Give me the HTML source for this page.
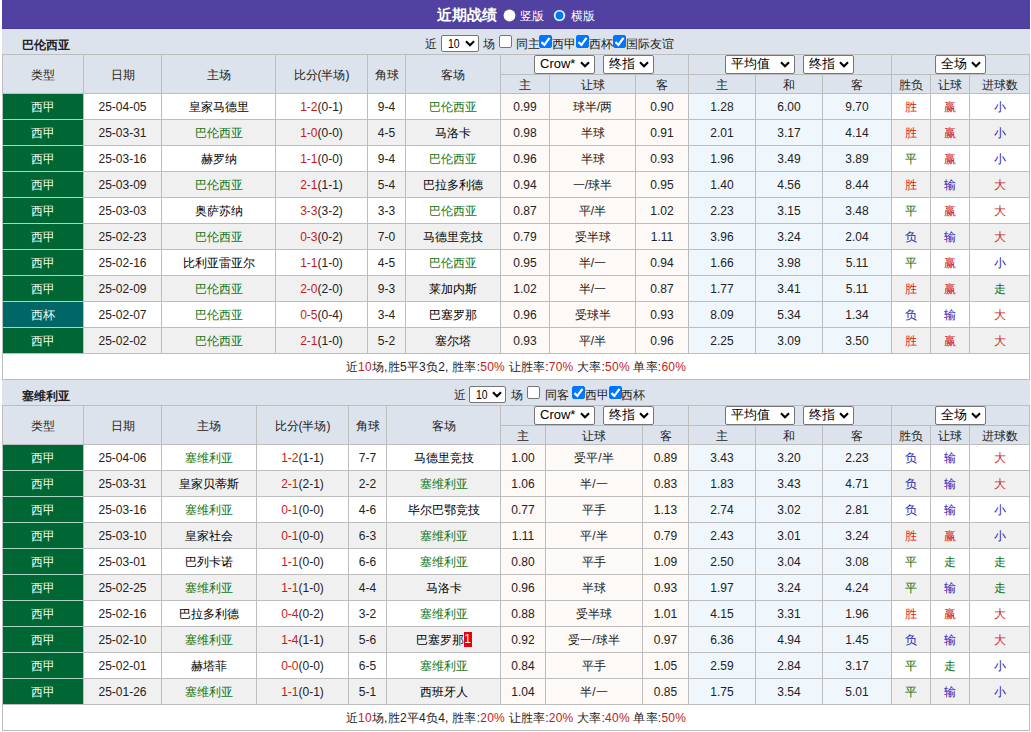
<!DOCTYPE html>
<html><head><meta charset="utf-8"><title>近期战绩</title><style>
*{margin:0;padding:0;box-sizing:border-box}
html,body{width:1031px;height:732px;overflow:hidden;background:#fff}
body{position:relative;font-family:"Liberation Sans",sans-serif;font-size:12px;color:#222}
.b,.c,.t,.team,.title,.ttl2,.radio,.sel,.cb{position:absolute}
.c{text-align:center;white-space:nowrap;overflow:hidden}
.t{height:22px;line-height:28px;font-size:12px;color:#222;white-space:nowrap}
.team{font-weight:bold;font-size:12px;color:#222}
.title{font-weight:bold;font-size:15px;color:#fff;white-space:nowrap}
.ttl2{font-size:12px;color:#fff;white-space:nowrap}
.radio{width:12px;height:12px;border-radius:50%;background:#fff}
.radio.on{background:#0075ff;border:1px solid #0075ff;box-shadow:inset 0 0 0 2px #fff}
.sel{background:#fff;border:1px solid #767676;border-radius:2px;color:#000;white-space:nowrap}
.sel .st{position:absolute;top:0}
.sel .chev{position:absolute;right:3px}
.cb{width:13px;height:13px;border:1px solid #767676;border-radius:2px;background:#fff}
.cb.on{background:#0075ff;border-color:#0075ff}
.cb svg{position:absolute;left:-1px;top:-1px}
.rc{display:inline-block;background:#e8000e;color:#fff;width:8px;height:15px;line-height:15px;text-align:center;vertical-align:middle;margin-top:-2px}
</style></head>
<body>
<div class="b" style="left:2px;top:0px;width:1028px;height:29px;background:#5141a0;"></div>
<div class="b" style="left:2px;top:28px;width:1028px;height:1px;background:#4a3c90;"></div>
<div class="b" style="left:2px;top:29px;width:1028px;height:1px;background:#e2e4f6;"></div>
<div class="title" style="left:437px;top:0px;height:29px;line-height:30px;">近期战绩</div>
<svg class="b" style="left:500px;top:6px" width="20" height="20" viewBox="0 0 20 20"><circle cx="9.5" cy="9.5" r="5.9" fill="#fff"/></svg>
<div class="ttl2" style="left:520px;top:0px;height:29px;line-height:33px;">竖版</div>
<svg class="b" style="left:550px;top:6px" width="20" height="20" viewBox="0 0 20 20"><circle cx="9.5" cy="9.5" r="6.6" fill="#3a66d8" opacity="0.55"/><circle cx="9.5" cy="9.5" r="5.6" fill="#e8ffff"/><circle cx="9.5" cy="9.5" r="3.9" fill="#0075ff"/></svg>
<div class="ttl2" style="left:571px;top:0px;height:29px;line-height:33px;">横版</div>
<div class="b" style="left:2px;top:29px;width:1028px;height:25px;background:#dce3ec;"></div>
<div class="team" style="left:22px;top:29px;height:25px;line-height:32px;">巴伦西亚</div>
<div class="t" style="left:425px;top:30px;">近</div>
<div class="sel sm" style="left:441px;top:35px;width:38px;height:17px;"><span class="st" style="left:6px;font-size:13px;line-height:15px;display:inline-block;transform:scaleX(0.8);transform-origin:0 0;">10</span><svg class="chev" style="top:4px;right:3px" width="10" height="7" viewBox="0 0 10 7"><path d="M1 1.2 L5 5.2 L9 1.2" fill="none" stroke="#000" stroke-width="2.1"/></svg></div>
<div class="t" style="left:483px;top:30px;">场</div>
<div class="cb" style="left:499px;top:35px;"></div>
<div class="t" style="left:516px;top:30px;">同主</div>
<div class="cb on" style="left:539px;top:35px;"><svg width="13" height="13" viewBox="0 0 13 13"><path d="M2.4 7.1 L5.4 9.8 L10.5 2.8" fill="none" stroke="#fff" stroke-width="2.2"/></svg></div>
<div class="t" style="left:552px;top:30px;">西甲</div>
<div class="cb on" style="left:576px;top:35px;"><svg width="13" height="13" viewBox="0 0 13 13"><path d="M2.4 7.1 L5.4 9.8 L10.5 2.8" fill="none" stroke="#fff" stroke-width="2.2"/></svg></div>
<div class="t" style="left:589px;top:30px;">西杯</div>
<div class="cb on" style="left:613px;top:35px;"><svg width="13" height="13" viewBox="0 0 13 13"><path d="M2.4 7.1 L5.4 9.8 L10.5 2.8" fill="none" stroke="#fff" stroke-width="2.2"/></svg></div>
<div class="t" style="left:626px;top:30px;">国际友谊</div>
<div class="b" style="left:2px;top:54px;width:1028px;height:326px;background:#bdbdbd;"></div>
<div class="c" style="left:3px;top:55px;width:80px;height:38px;line-height:40px;background:#dce3ec;color:#222;">类型</div>
<div class="c" style="left:84px;top:55px;width:77px;height:38px;line-height:40px;background:#dce3ec;color:#222;">日期</div>
<div class="c" style="left:162px;top:55px;width:113px;height:38px;line-height:40px;background:#dce3ec;color:#222;">主场</div>
<div class="c" style="left:276px;top:55px;width:91px;height:38px;line-height:40px;background:#dce3ec;color:#222;">比分(半场)</div>
<div class="c" style="left:368px;top:55px;width:37px;height:38px;line-height:40px;background:#dce3ec;color:#222;">角球</div>
<div class="c" style="left:406px;top:55px;width:94px;height:38px;line-height:40px;background:#dce3ec;color:#222;">客场</div>
<div class="b" style="left:501px;top:55px;width:187px;height:19px;background:#dce3ec;"></div>
<div class="b" style="left:689px;top:55px;width:202px;height:19px;background:#dce3ec;"></div>
<div class="b" style="left:892px;top:55px;width:137px;height:19px;background:#dce3ec;"></div>
<div class="c" style="left:501px;top:75px;width:48px;height:18px;line-height:20px;background:#dce3ec;color:#222;">主</div>
<div class="c" style="left:550px;top:75px;width:85px;height:18px;line-height:20px;background:#dce3ec;color:#222;">让球</div>
<div class="c" style="left:636px;top:75px;width:52px;height:18px;line-height:20px;background:#dce3ec;color:#222;">客</div>
<div class="c" style="left:689px;top:75px;width:66px;height:18px;line-height:20px;background:#dce3ec;color:#222;">主</div>
<div class="c" style="left:756px;top:75px;width:66px;height:18px;line-height:20px;background:#dce3ec;color:#222;">和</div>
<div class="c" style="left:823px;top:75px;width:68px;height:18px;line-height:20px;background:#dce3ec;color:#222;">客</div>
<div class="c" style="left:892px;top:75px;width:38px;height:18px;line-height:20px;background:#dce3ec;color:#222;">胜负</div>
<div class="c" style="left:931px;top:75px;width:38px;height:18px;line-height:20px;background:#dce3ec;color:#222;">让球</div>
<div class="c" style="left:970px;top:75px;width:59px;height:18px;line-height:20px;background:#dce3ec;color:#222;">进球数</div>
<div class="sel" style="left:534px;top:55px;width:61px;height:19px;"><span class="st" style="left:5px;font-size:13px;line-height:16px;">Crow*</span><svg class="chev" style="top:5px;right:4px" width="10" height="7" viewBox="0 0 10 7"><path d="M1 1.2 L5 5.2 L9 1.2" fill="none" stroke="#000" stroke-width="2.1"/></svg></div>
<div class="sel" style="left:603px;top:55px;width:51px;height:19px;"><span class="st" style="left:5px;font-size:13px;line-height:16px;">终指</span><svg class="chev" style="top:5px;right:4px" width="10" height="7" viewBox="0 0 10 7"><path d="M1 1.2 L5 5.2 L9 1.2" fill="none" stroke="#000" stroke-width="2.1"/></svg></div>
<div class="sel" style="left:725px;top:55px;width:70px;height:19px;"><span class="st" style="left:5px;font-size:13px;line-height:16px;">平均值</span><svg class="chev" style="top:5px;right:4px" width="10" height="7" viewBox="0 0 10 7"><path d="M1 1.2 L5 5.2 L9 1.2" fill="none" stroke="#000" stroke-width="2.1"/></svg></div>
<div class="sel" style="left:803px;top:55px;width:51px;height:19px;"><span class="st" style="left:5px;font-size:13px;line-height:16px;">终指</span><svg class="chev" style="top:5px;right:4px" width="10" height="7" viewBox="0 0 10 7"><path d="M1 1.2 L5 5.2 L9 1.2" fill="none" stroke="#000" stroke-width="2.1"/></svg></div>
<div class="sel" style="left:935px;top:55px;width:51px;height:19px;"><span class="st" style="left:5px;font-size:13px;line-height:16px;">全场</span><svg class="chev" style="top:5px;right:4px" width="10" height="7" viewBox="0 0 10 7"><path d="M1 1.2 L5 5.2 L9 1.2" fill="none" stroke="#000" stroke-width="2.1"/></svg></div>
<div class="c" style="left:3px;top:94px;width:80px;height:25px;line-height:27px;background:#006633;color:#f0fff8;">西甲</div>
<div class="c" style="left:84px;top:94px;width:77px;height:25px;line-height:27px;background:#ffffff;">25-04-05</div>
<div class="c" style="left:162px;top:94px;width:113px;height:25px;line-height:27px;background:#ffffff;color:#000;">皇家马德里</div>
<div class="c" style="left:276px;top:94px;width:91px;height:25px;line-height:27px;background:#ffffff;"><span style="color:#c41a1a">1-2</span>(0-1)</div>
<div class="c" style="left:368px;top:94px;width:37px;height:25px;line-height:27px;background:#ffffff;">9-4</div>
<div class="c" style="left:406px;top:94px;width:94px;height:25px;line-height:27px;background:#ffffff;color:#137513;">巴伦西亚</div>
<div class="c" style="left:501px;top:94px;width:48px;height:25px;line-height:27px;background:#fdf9f6;">0.99</div>
<div class="c" style="left:550px;top:94px;width:85px;height:25px;line-height:27px;background:#fdf9f6;">球半/两</div>
<div class="c" style="left:636px;top:94px;width:52px;height:25px;line-height:27px;background:#fdf9f6;">0.90</div>
<div class="c" style="left:689px;top:94px;width:66px;height:25px;line-height:27px;background:#eff7fc;">1.28</div>
<div class="c" style="left:756px;top:94px;width:66px;height:25px;line-height:27px;background:#eff7fc;">6.00</div>
<div class="c" style="left:823px;top:94px;width:68px;height:25px;line-height:27px;background:#eff7fc;">9.70</div>
<div class="c" style="left:892px;top:94px;width:38px;height:25px;line-height:27px;background:#ffffff;color:#e02020;">胜</div>
<div class="c" style="left:931px;top:94px;width:38px;height:25px;line-height:27px;background:#ffffff;color:#d02020;">赢</div>
<div class="c" style="left:970px;top:94px;width:59px;height:25px;line-height:27px;background:#ffffff;color:#1c1cb4;">小</div>
<div class="c" style="left:3px;top:120px;width:80px;height:25px;line-height:27px;background:#006633;color:#f0fff8;">西甲</div>
<div class="b" style="left:3px;top:119px;width:80px;height:1px;background:#a9d6c2;"></div>
<div class="c" style="left:84px;top:120px;width:77px;height:25px;line-height:27px;background:#f0f0f0;">25-03-31</div>
<div class="c" style="left:162px;top:120px;width:113px;height:25px;line-height:27px;background:#f0f0f0;color:#137513;">巴伦西亚</div>
<div class="c" style="left:276px;top:120px;width:91px;height:25px;line-height:27px;background:#f0f0f0;"><span style="color:#c41a1a">1-0</span>(0-0)</div>
<div class="c" style="left:368px;top:120px;width:37px;height:25px;line-height:27px;background:#f0f0f0;">4-5</div>
<div class="c" style="left:406px;top:120px;width:94px;height:25px;line-height:27px;background:#f0f0f0;color:#000;">马洛卡</div>
<div class="c" style="left:501px;top:120px;width:48px;height:25px;line-height:27px;background:#fdf9f6;">0.98</div>
<div class="c" style="left:550px;top:120px;width:85px;height:25px;line-height:27px;background:#fdf9f6;">半球</div>
<div class="c" style="left:636px;top:120px;width:52px;height:25px;line-height:27px;background:#fdf9f6;">0.91</div>
<div class="c" style="left:689px;top:120px;width:66px;height:25px;line-height:27px;background:#eff7fc;">2.01</div>
<div class="c" style="left:756px;top:120px;width:66px;height:25px;line-height:27px;background:#eff7fc;">3.17</div>
<div class="c" style="left:823px;top:120px;width:68px;height:25px;line-height:27px;background:#eff7fc;">4.14</div>
<div class="c" style="left:892px;top:120px;width:38px;height:25px;line-height:27px;background:#f0f0f0;color:#e02020;">胜</div>
<div class="c" style="left:931px;top:120px;width:38px;height:25px;line-height:27px;background:#f0f0f0;color:#d02020;">赢</div>
<div class="c" style="left:970px;top:120px;width:59px;height:25px;line-height:27px;background:#f0f0f0;color:#1c1cb4;">小</div>
<div class="c" style="left:3px;top:146px;width:80px;height:25px;line-height:27px;background:#006633;color:#f0fff8;">西甲</div>
<div class="b" style="left:3px;top:145px;width:80px;height:1px;background:#a9d6c2;"></div>
<div class="c" style="left:84px;top:146px;width:77px;height:25px;line-height:27px;background:#ffffff;">25-03-16</div>
<div class="c" style="left:162px;top:146px;width:113px;height:25px;line-height:27px;background:#ffffff;color:#000;">赫罗纳</div>
<div class="c" style="left:276px;top:146px;width:91px;height:25px;line-height:27px;background:#ffffff;"><span style="color:#c41a1a">1-1</span>(0-0)</div>
<div class="c" style="left:368px;top:146px;width:37px;height:25px;line-height:27px;background:#ffffff;">9-4</div>
<div class="c" style="left:406px;top:146px;width:94px;height:25px;line-height:27px;background:#ffffff;color:#137513;">巴伦西亚</div>
<div class="c" style="left:501px;top:146px;width:48px;height:25px;line-height:27px;background:#fdf9f6;">0.96</div>
<div class="c" style="left:550px;top:146px;width:85px;height:25px;line-height:27px;background:#fdf9f6;">半球</div>
<div class="c" style="left:636px;top:146px;width:52px;height:25px;line-height:27px;background:#fdf9f6;">0.93</div>
<div class="c" style="left:689px;top:146px;width:66px;height:25px;line-height:27px;background:#eff7fc;">1.96</div>
<div class="c" style="left:756px;top:146px;width:66px;height:25px;line-height:27px;background:#eff7fc;">3.49</div>
<div class="c" style="left:823px;top:146px;width:68px;height:25px;line-height:27px;background:#eff7fc;">3.89</div>
<div class="c" style="left:892px;top:146px;width:38px;height:25px;line-height:27px;background:#ffffff;color:#0b6e0b;">平</div>
<div class="c" style="left:931px;top:146px;width:38px;height:25px;line-height:27px;background:#ffffff;color:#d02020;">赢</div>
<div class="c" style="left:970px;top:146px;width:59px;height:25px;line-height:27px;background:#ffffff;color:#1c1cb4;">小</div>
<div class="c" style="left:3px;top:172px;width:80px;height:25px;line-height:27px;background:#006633;color:#f0fff8;">西甲</div>
<div class="b" style="left:3px;top:171px;width:80px;height:1px;background:#a9d6c2;"></div>
<div class="c" style="left:84px;top:172px;width:77px;height:25px;line-height:27px;background:#f0f0f0;">25-03-09</div>
<div class="c" style="left:162px;top:172px;width:113px;height:25px;line-height:27px;background:#f0f0f0;color:#137513;">巴伦西亚</div>
<div class="c" style="left:276px;top:172px;width:91px;height:25px;line-height:27px;background:#f0f0f0;"><span style="color:#c41a1a">2-1</span>(1-1)</div>
<div class="c" style="left:368px;top:172px;width:37px;height:25px;line-height:27px;background:#f0f0f0;">5-4</div>
<div class="c" style="left:406px;top:172px;width:94px;height:25px;line-height:27px;background:#f0f0f0;color:#000;">巴拉多利德</div>
<div class="c" style="left:501px;top:172px;width:48px;height:25px;line-height:27px;background:#fdf9f6;">0.94</div>
<div class="c" style="left:550px;top:172px;width:85px;height:25px;line-height:27px;background:#fdf9f6;">一/球半</div>
<div class="c" style="left:636px;top:172px;width:52px;height:25px;line-height:27px;background:#fdf9f6;">0.95</div>
<div class="c" style="left:689px;top:172px;width:66px;height:25px;line-height:27px;background:#eff7fc;">1.40</div>
<div class="c" style="left:756px;top:172px;width:66px;height:25px;line-height:27px;background:#eff7fc;">4.56</div>
<div class="c" style="left:823px;top:172px;width:68px;height:25px;line-height:27px;background:#eff7fc;">8.44</div>
<div class="c" style="left:892px;top:172px;width:38px;height:25px;line-height:27px;background:#f0f0f0;color:#e02020;">胜</div>
<div class="c" style="left:931px;top:172px;width:38px;height:25px;line-height:27px;background:#f0f0f0;color:#1c1cb4;">输</div>
<div class="c" style="left:970px;top:172px;width:59px;height:25px;line-height:27px;background:#f0f0f0;color:#cc2a1a;">大</div>
<div class="c" style="left:3px;top:198px;width:80px;height:25px;line-height:27px;background:#006633;color:#f0fff8;">西甲</div>
<div class="b" style="left:3px;top:197px;width:80px;height:1px;background:#a9d6c2;"></div>
<div class="c" style="left:84px;top:198px;width:77px;height:25px;line-height:27px;background:#ffffff;">25-03-03</div>
<div class="c" style="left:162px;top:198px;width:113px;height:25px;line-height:27px;background:#ffffff;color:#000;">奥萨苏纳</div>
<div class="c" style="left:276px;top:198px;width:91px;height:25px;line-height:27px;background:#ffffff;"><span style="color:#c41a1a">3-3</span>(3-2)</div>
<div class="c" style="left:368px;top:198px;width:37px;height:25px;line-height:27px;background:#ffffff;">3-3</div>
<div class="c" style="left:406px;top:198px;width:94px;height:25px;line-height:27px;background:#ffffff;color:#137513;">巴伦西亚</div>
<div class="c" style="left:501px;top:198px;width:48px;height:25px;line-height:27px;background:#fdf9f6;">0.87</div>
<div class="c" style="left:550px;top:198px;width:85px;height:25px;line-height:27px;background:#fdf9f6;">平/半</div>
<div class="c" style="left:636px;top:198px;width:52px;height:25px;line-height:27px;background:#fdf9f6;">1.02</div>
<div class="c" style="left:689px;top:198px;width:66px;height:25px;line-height:27px;background:#eff7fc;">2.23</div>
<div class="c" style="left:756px;top:198px;width:66px;height:25px;line-height:27px;background:#eff7fc;">3.15</div>
<div class="c" style="left:823px;top:198px;width:68px;height:25px;line-height:27px;background:#eff7fc;">3.48</div>
<div class="c" style="left:892px;top:198px;width:38px;height:25px;line-height:27px;background:#ffffff;color:#0b6e0b;">平</div>
<div class="c" style="left:931px;top:198px;width:38px;height:25px;line-height:27px;background:#ffffff;color:#d02020;">赢</div>
<div class="c" style="left:970px;top:198px;width:59px;height:25px;line-height:27px;background:#ffffff;color:#cc2a1a;">大</div>
<div class="c" style="left:3px;top:224px;width:80px;height:25px;line-height:27px;background:#006633;color:#f0fff8;">西甲</div>
<div class="b" style="left:3px;top:223px;width:80px;height:1px;background:#a9d6c2;"></div>
<div class="c" style="left:84px;top:224px;width:77px;height:25px;line-height:27px;background:#f0f0f0;">25-02-23</div>
<div class="c" style="left:162px;top:224px;width:113px;height:25px;line-height:27px;background:#f0f0f0;color:#137513;">巴伦西亚</div>
<div class="c" style="left:276px;top:224px;width:91px;height:25px;line-height:27px;background:#f0f0f0;"><span style="color:#c41a1a">0-3</span>(0-2)</div>
<div class="c" style="left:368px;top:224px;width:37px;height:25px;line-height:27px;background:#f0f0f0;">7-0</div>
<div class="c" style="left:406px;top:224px;width:94px;height:25px;line-height:27px;background:#f0f0f0;color:#000;">马德里竞技</div>
<div class="c" style="left:501px;top:224px;width:48px;height:25px;line-height:27px;background:#fdf9f6;">0.79</div>
<div class="c" style="left:550px;top:224px;width:85px;height:25px;line-height:27px;background:#fdf9f6;">受半球</div>
<div class="c" style="left:636px;top:224px;width:52px;height:25px;line-height:27px;background:#fdf9f6;">1.11</div>
<div class="c" style="left:689px;top:224px;width:66px;height:25px;line-height:27px;background:#eff7fc;">3.96</div>
<div class="c" style="left:756px;top:224px;width:66px;height:25px;line-height:27px;background:#eff7fc;">3.24</div>
<div class="c" style="left:823px;top:224px;width:68px;height:25px;line-height:27px;background:#eff7fc;">2.04</div>
<div class="c" style="left:892px;top:224px;width:38px;height:25px;line-height:27px;background:#f0f0f0;color:#1c1cb4;">负</div>
<div class="c" style="left:931px;top:224px;width:38px;height:25px;line-height:27px;background:#f0f0f0;color:#1c1cb4;">输</div>
<div class="c" style="left:970px;top:224px;width:59px;height:25px;line-height:27px;background:#f0f0f0;color:#cc2a1a;">大</div>
<div class="c" style="left:3px;top:250px;width:80px;height:25px;line-height:27px;background:#006633;color:#f0fff8;">西甲</div>
<div class="b" style="left:3px;top:249px;width:80px;height:1px;background:#a9d6c2;"></div>
<div class="c" style="left:84px;top:250px;width:77px;height:25px;line-height:27px;background:#ffffff;">25-02-16</div>
<div class="c" style="left:162px;top:250px;width:113px;height:25px;line-height:27px;background:#ffffff;color:#000;">比利亚雷亚尔</div>
<div class="c" style="left:276px;top:250px;width:91px;height:25px;line-height:27px;background:#ffffff;"><span style="color:#c41a1a">1-1</span>(1-0)</div>
<div class="c" style="left:368px;top:250px;width:37px;height:25px;line-height:27px;background:#ffffff;">4-5</div>
<div class="c" style="left:406px;top:250px;width:94px;height:25px;line-height:27px;background:#ffffff;color:#137513;">巴伦西亚</div>
<div class="c" style="left:501px;top:250px;width:48px;height:25px;line-height:27px;background:#fdf9f6;">0.95</div>
<div class="c" style="left:550px;top:250px;width:85px;height:25px;line-height:27px;background:#fdf9f6;">半/一</div>
<div class="c" style="left:636px;top:250px;width:52px;height:25px;line-height:27px;background:#fdf9f6;">0.94</div>
<div class="c" style="left:689px;top:250px;width:66px;height:25px;line-height:27px;background:#eff7fc;">1.66</div>
<div class="c" style="left:756px;top:250px;width:66px;height:25px;line-height:27px;background:#eff7fc;">3.98</div>
<div class="c" style="left:823px;top:250px;width:68px;height:25px;line-height:27px;background:#eff7fc;">5.11</div>
<div class="c" style="left:892px;top:250px;width:38px;height:25px;line-height:27px;background:#ffffff;color:#0b6e0b;">平</div>
<div class="c" style="left:931px;top:250px;width:38px;height:25px;line-height:27px;background:#ffffff;color:#d02020;">赢</div>
<div class="c" style="left:970px;top:250px;width:59px;height:25px;line-height:27px;background:#ffffff;color:#1c1cb4;">小</div>
<div class="c" style="left:3px;top:276px;width:80px;height:25px;line-height:27px;background:#006633;color:#f0fff8;">西甲</div>
<div class="b" style="left:3px;top:275px;width:80px;height:1px;background:#a9d6c2;"></div>
<div class="c" style="left:84px;top:276px;width:77px;height:25px;line-height:27px;background:#f0f0f0;">25-02-09</div>
<div class="c" style="left:162px;top:276px;width:113px;height:25px;line-height:27px;background:#f0f0f0;color:#137513;">巴伦西亚</div>
<div class="c" style="left:276px;top:276px;width:91px;height:25px;line-height:27px;background:#f0f0f0;"><span style="color:#c41a1a">2-0</span>(2-0)</div>
<div class="c" style="left:368px;top:276px;width:37px;height:25px;line-height:27px;background:#f0f0f0;">9-3</div>
<div class="c" style="left:406px;top:276px;width:94px;height:25px;line-height:27px;background:#f0f0f0;color:#000;">莱加内斯</div>
<div class="c" style="left:501px;top:276px;width:48px;height:25px;line-height:27px;background:#fdf9f6;">1.02</div>
<div class="c" style="left:550px;top:276px;width:85px;height:25px;line-height:27px;background:#fdf9f6;">半/一</div>
<div class="c" style="left:636px;top:276px;width:52px;height:25px;line-height:27px;background:#fdf9f6;">0.87</div>
<div class="c" style="left:689px;top:276px;width:66px;height:25px;line-height:27px;background:#eff7fc;">1.77</div>
<div class="c" style="left:756px;top:276px;width:66px;height:25px;line-height:27px;background:#eff7fc;">3.41</div>
<div class="c" style="left:823px;top:276px;width:68px;height:25px;line-height:27px;background:#eff7fc;">5.11</div>
<div class="c" style="left:892px;top:276px;width:38px;height:25px;line-height:27px;background:#f0f0f0;color:#e02020;">胜</div>
<div class="c" style="left:931px;top:276px;width:38px;height:25px;line-height:27px;background:#f0f0f0;color:#d02020;">赢</div>
<div class="c" style="left:970px;top:276px;width:59px;height:25px;line-height:27px;background:#f0f0f0;color:#0b6e0b;">走</div>
<div class="c" style="left:3px;top:302px;width:80px;height:25px;line-height:27px;background:#006666;color:#f0fff8;">西杯</div>
<div class="b" style="left:3px;top:301px;width:80px;height:1px;background:#a9d6c2;"></div>
<div class="c" style="left:84px;top:302px;width:77px;height:25px;line-height:27px;background:#ffffff;">25-02-07</div>
<div class="c" style="left:162px;top:302px;width:113px;height:25px;line-height:27px;background:#ffffff;color:#137513;">巴伦西亚</div>
<div class="c" style="left:276px;top:302px;width:91px;height:25px;line-height:27px;background:#ffffff;"><span style="color:#c41a1a">0-5</span>(0-4)</div>
<div class="c" style="left:368px;top:302px;width:37px;height:25px;line-height:27px;background:#ffffff;">3-4</div>
<div class="c" style="left:406px;top:302px;width:94px;height:25px;line-height:27px;background:#ffffff;color:#000;">巴塞罗那</div>
<div class="c" style="left:501px;top:302px;width:48px;height:25px;line-height:27px;background:#fdf9f6;">0.96</div>
<div class="c" style="left:550px;top:302px;width:85px;height:25px;line-height:27px;background:#fdf9f6;">受球半</div>
<div class="c" style="left:636px;top:302px;width:52px;height:25px;line-height:27px;background:#fdf9f6;">0.93</div>
<div class="c" style="left:689px;top:302px;width:66px;height:25px;line-height:27px;background:#eff7fc;">8.09</div>
<div class="c" style="left:756px;top:302px;width:66px;height:25px;line-height:27px;background:#eff7fc;">5.34</div>
<div class="c" style="left:823px;top:302px;width:68px;height:25px;line-height:27px;background:#eff7fc;">1.34</div>
<div class="c" style="left:892px;top:302px;width:38px;height:25px;line-height:27px;background:#ffffff;color:#1c1cb4;">负</div>
<div class="c" style="left:931px;top:302px;width:38px;height:25px;line-height:27px;background:#ffffff;color:#1c1cb4;">输</div>
<div class="c" style="left:970px;top:302px;width:59px;height:25px;line-height:27px;background:#ffffff;color:#cc2a1a;">大</div>
<div class="c" style="left:3px;top:328px;width:80px;height:25px;line-height:27px;background:#006633;color:#f0fff8;">西甲</div>
<div class="b" style="left:3px;top:327px;width:80px;height:1px;background:#a9d6c2;"></div>
<div class="c" style="left:84px;top:328px;width:77px;height:25px;line-height:27px;background:#f0f0f0;">25-02-02</div>
<div class="c" style="left:162px;top:328px;width:113px;height:25px;line-height:27px;background:#f0f0f0;color:#137513;">巴伦西亚</div>
<div class="c" style="left:276px;top:328px;width:91px;height:25px;line-height:27px;background:#f0f0f0;"><span style="color:#c41a1a">2-1</span>(1-0)</div>
<div class="c" style="left:368px;top:328px;width:37px;height:25px;line-height:27px;background:#f0f0f0;">5-2</div>
<div class="c" style="left:406px;top:328px;width:94px;height:25px;line-height:27px;background:#f0f0f0;color:#000;">塞尔塔</div>
<div class="c" style="left:501px;top:328px;width:48px;height:25px;line-height:27px;background:#fdf9f6;">0.93</div>
<div class="c" style="left:550px;top:328px;width:85px;height:25px;line-height:27px;background:#fdf9f6;">平/半</div>
<div class="c" style="left:636px;top:328px;width:52px;height:25px;line-height:27px;background:#fdf9f6;">0.96</div>
<div class="c" style="left:689px;top:328px;width:66px;height:25px;line-height:27px;background:#eff7fc;">2.25</div>
<div class="c" style="left:756px;top:328px;width:66px;height:25px;line-height:27px;background:#eff7fc;">3.09</div>
<div class="c" style="left:823px;top:328px;width:68px;height:25px;line-height:27px;background:#eff7fc;">3.50</div>
<div class="c" style="left:892px;top:328px;width:38px;height:25px;line-height:27px;background:#f0f0f0;color:#e02020;">胜</div>
<div class="c" style="left:931px;top:328px;width:38px;height:25px;line-height:27px;background:#f0f0f0;color:#d02020;">赢</div>
<div class="c" style="left:970px;top:328px;width:59px;height:25px;line-height:27px;background:#f0f0f0;color:#cc2a1a;">大</div>
<div class="c" style="left:3px;top:354px;width:1026px;height:25px;line-height:27px;background:#ffffff;letter-spacing:0.23px;">近<span style="color:#c41a1a">10</span>场,胜5平3负2, 胜率:<span style="color:#c41a1a">50%</span> 让胜率:<span style="color:#c41a1a">70%</span> 大率:<span style="color:#c41a1a">50%</span> 单率:<span style="color:#c41a1a">60%</span></div>
<div class="b" style="left:2px;top:380px;width:1028px;height:25px;background:#dce3ec;"></div>
<div class="team" style="left:22px;top:380px;height:25px;line-height:32px;">塞维利亚</div>
<div class="t" style="left:454px;top:381px;">近</div>
<div class="sel sm" style="left:469px;top:386px;width:37px;height:17px;"><span class="st" style="left:6px;font-size:13px;line-height:15px;display:inline-block;transform:scaleX(0.8);transform-origin:0 0;">10</span><svg class="chev" style="top:4px;right:3px" width="10" height="7" viewBox="0 0 10 7"><path d="M1 1.2 L5 5.2 L9 1.2" fill="none" stroke="#000" stroke-width="2.1"/></svg></div>
<div class="t" style="left:511px;top:381px;">场</div>
<div class="cb" style="left:527px;top:386px;"></div>
<div class="t" style="left:545px;top:381px;">同客</div>
<div class="cb on" style="left:572px;top:386px;"><svg width="13" height="13" viewBox="0 0 13 13"><path d="M2.4 7.1 L5.4 9.8 L10.5 2.8" fill="none" stroke="#fff" stroke-width="2.2"/></svg></div>
<div class="t" style="left:585px;top:381px;">西甲</div>
<div class="cb on" style="left:609px;top:386px;"><svg width="13" height="13" viewBox="0 0 13 13"><path d="M2.4 7.1 L5.4 9.8 L10.5 2.8" fill="none" stroke="#fff" stroke-width="2.2"/></svg></div>
<div class="t" style="left:621px;top:381px;">西杯</div>
<div class="b" style="left:2px;top:405px;width:1028px;height:326px;background:#bdbdbd;"></div>
<div class="c" style="left:3px;top:406px;width:80px;height:38px;line-height:40px;background:#dce3ec;color:#222;">类型</div>
<div class="c" style="left:84px;top:406px;width:77px;height:38px;line-height:40px;background:#dce3ec;color:#222;">日期</div>
<div class="c" style="left:162px;top:406px;width:94px;height:38px;line-height:40px;background:#dce3ec;color:#222;">主场</div>
<div class="c" style="left:257px;top:406px;width:91px;height:38px;line-height:40px;background:#dce3ec;color:#222;">比分(半场)</div>
<div class="c" style="left:349px;top:406px;width:37px;height:38px;line-height:40px;background:#dce3ec;color:#222;">角球</div>
<div class="c" style="left:387px;top:406px;width:113px;height:38px;line-height:40px;background:#dce3ec;color:#222;">客场</div>
<div class="b" style="left:501px;top:406px;width:187px;height:19px;background:#dce3ec;"></div>
<div class="b" style="left:689px;top:406px;width:202px;height:19px;background:#dce3ec;"></div>
<div class="b" style="left:892px;top:406px;width:137px;height:19px;background:#dce3ec;"></div>
<div class="c" style="left:501px;top:426px;width:44px;height:18px;line-height:20px;background:#dce3ec;color:#222;">主</div>
<div class="c" style="left:546px;top:426px;width:96px;height:18px;line-height:20px;background:#dce3ec;color:#222;">让球</div>
<div class="c" style="left:643px;top:426px;width:45px;height:18px;line-height:20px;background:#dce3ec;color:#222;">客</div>
<div class="c" style="left:689px;top:426px;width:66px;height:18px;line-height:20px;background:#dce3ec;color:#222;">主</div>
<div class="c" style="left:756px;top:426px;width:66px;height:18px;line-height:20px;background:#dce3ec;color:#222;">和</div>
<div class="c" style="left:823px;top:426px;width:68px;height:18px;line-height:20px;background:#dce3ec;color:#222;">客</div>
<div class="c" style="left:892px;top:426px;width:38px;height:18px;line-height:20px;background:#dce3ec;color:#222;">胜负</div>
<div class="c" style="left:931px;top:426px;width:38px;height:18px;line-height:20px;background:#dce3ec;color:#222;">让球</div>
<div class="c" style="left:970px;top:426px;width:59px;height:18px;line-height:20px;background:#dce3ec;color:#222;">进球数</div>
<div class="sel" style="left:534px;top:406px;width:61px;height:19px;"><span class="st" style="left:5px;font-size:13px;line-height:16px;">Crow*</span><svg class="chev" style="top:5px;right:4px" width="10" height="7" viewBox="0 0 10 7"><path d="M1 1.2 L5 5.2 L9 1.2" fill="none" stroke="#000" stroke-width="2.1"/></svg></div>
<div class="sel" style="left:603px;top:406px;width:51px;height:19px;"><span class="st" style="left:5px;font-size:13px;line-height:16px;">终指</span><svg class="chev" style="top:5px;right:4px" width="10" height="7" viewBox="0 0 10 7"><path d="M1 1.2 L5 5.2 L9 1.2" fill="none" stroke="#000" stroke-width="2.1"/></svg></div>
<div class="sel" style="left:725px;top:406px;width:70px;height:19px;"><span class="st" style="left:5px;font-size:13px;line-height:16px;">平均值</span><svg class="chev" style="top:5px;right:4px" width="10" height="7" viewBox="0 0 10 7"><path d="M1 1.2 L5 5.2 L9 1.2" fill="none" stroke="#000" stroke-width="2.1"/></svg></div>
<div class="sel" style="left:803px;top:406px;width:51px;height:19px;"><span class="st" style="left:5px;font-size:13px;line-height:16px;">终指</span><svg class="chev" style="top:5px;right:4px" width="10" height="7" viewBox="0 0 10 7"><path d="M1 1.2 L5 5.2 L9 1.2" fill="none" stroke="#000" stroke-width="2.1"/></svg></div>
<div class="sel" style="left:935px;top:406px;width:51px;height:19px;"><span class="st" style="left:5px;font-size:13px;line-height:16px;">全场</span><svg class="chev" style="top:5px;right:4px" width="10" height="7" viewBox="0 0 10 7"><path d="M1 1.2 L5 5.2 L9 1.2" fill="none" stroke="#000" stroke-width="2.1"/></svg></div>
<div class="c" style="left:3px;top:445px;width:80px;height:25px;line-height:27px;background:#006633;color:#f0fff8;">西甲</div>
<div class="c" style="left:84px;top:445px;width:77px;height:25px;line-height:27px;background:#ffffff;">25-04-06</div>
<div class="c" style="left:162px;top:445px;width:94px;height:25px;line-height:27px;background:#ffffff;color:#137513;">塞维利亚</div>
<div class="c" style="left:257px;top:445px;width:91px;height:25px;line-height:27px;background:#ffffff;"><span style="color:#c41a1a">1-2</span>(1-1)</div>
<div class="c" style="left:349px;top:445px;width:37px;height:25px;line-height:27px;background:#ffffff;">7-7</div>
<div class="c" style="left:387px;top:445px;width:113px;height:25px;line-height:27px;background:#ffffff;color:#000;">马德里竞技</div>
<div class="c" style="left:501px;top:445px;width:44px;height:25px;line-height:27px;background:#fdf9f6;">1.00</div>
<div class="c" style="left:546px;top:445px;width:96px;height:25px;line-height:27px;background:#fdf9f6;">受平/半</div>
<div class="c" style="left:643px;top:445px;width:45px;height:25px;line-height:27px;background:#fdf9f6;">0.89</div>
<div class="c" style="left:689px;top:445px;width:66px;height:25px;line-height:27px;background:#eff7fc;">3.43</div>
<div class="c" style="left:756px;top:445px;width:66px;height:25px;line-height:27px;background:#eff7fc;">3.20</div>
<div class="c" style="left:823px;top:445px;width:68px;height:25px;line-height:27px;background:#eff7fc;">2.23</div>
<div class="c" style="left:892px;top:445px;width:38px;height:25px;line-height:27px;background:#ffffff;color:#1c1cb4;">负</div>
<div class="c" style="left:931px;top:445px;width:38px;height:25px;line-height:27px;background:#ffffff;color:#1c1cb4;">输</div>
<div class="c" style="left:970px;top:445px;width:59px;height:25px;line-height:27px;background:#ffffff;color:#cc2a1a;">大</div>
<div class="c" style="left:3px;top:471px;width:80px;height:25px;line-height:27px;background:#006633;color:#f0fff8;">西甲</div>
<div class="b" style="left:3px;top:470px;width:80px;height:1px;background:#a9d6c2;"></div>
<div class="c" style="left:84px;top:471px;width:77px;height:25px;line-height:27px;background:#f0f0f0;">25-03-31</div>
<div class="c" style="left:162px;top:471px;width:94px;height:25px;line-height:27px;background:#f0f0f0;color:#000;">皇家贝蒂斯</div>
<div class="c" style="left:257px;top:471px;width:91px;height:25px;line-height:27px;background:#f0f0f0;"><span style="color:#c41a1a">2-1</span>(2-1)</div>
<div class="c" style="left:349px;top:471px;width:37px;height:25px;line-height:27px;background:#f0f0f0;">2-2</div>
<div class="c" style="left:387px;top:471px;width:113px;height:25px;line-height:27px;background:#f0f0f0;color:#137513;">塞维利亚</div>
<div class="c" style="left:501px;top:471px;width:44px;height:25px;line-height:27px;background:#fdf9f6;">1.06</div>
<div class="c" style="left:546px;top:471px;width:96px;height:25px;line-height:27px;background:#fdf9f6;">半/一</div>
<div class="c" style="left:643px;top:471px;width:45px;height:25px;line-height:27px;background:#fdf9f6;">0.83</div>
<div class="c" style="left:689px;top:471px;width:66px;height:25px;line-height:27px;background:#eff7fc;">1.83</div>
<div class="c" style="left:756px;top:471px;width:66px;height:25px;line-height:27px;background:#eff7fc;">3.43</div>
<div class="c" style="left:823px;top:471px;width:68px;height:25px;line-height:27px;background:#eff7fc;">4.71</div>
<div class="c" style="left:892px;top:471px;width:38px;height:25px;line-height:27px;background:#f0f0f0;color:#1c1cb4;">负</div>
<div class="c" style="left:931px;top:471px;width:38px;height:25px;line-height:27px;background:#f0f0f0;color:#1c1cb4;">输</div>
<div class="c" style="left:970px;top:471px;width:59px;height:25px;line-height:27px;background:#f0f0f0;color:#cc2a1a;">大</div>
<div class="c" style="left:3px;top:497px;width:80px;height:25px;line-height:27px;background:#006633;color:#f0fff8;">西甲</div>
<div class="b" style="left:3px;top:496px;width:80px;height:1px;background:#a9d6c2;"></div>
<div class="c" style="left:84px;top:497px;width:77px;height:25px;line-height:27px;background:#ffffff;">25-03-16</div>
<div class="c" style="left:162px;top:497px;width:94px;height:25px;line-height:27px;background:#ffffff;color:#137513;">塞维利亚</div>
<div class="c" style="left:257px;top:497px;width:91px;height:25px;line-height:27px;background:#ffffff;"><span style="color:#c41a1a">0-1</span>(0-0)</div>
<div class="c" style="left:349px;top:497px;width:37px;height:25px;line-height:27px;background:#ffffff;">4-6</div>
<div class="c" style="left:387px;top:497px;width:113px;height:25px;line-height:27px;background:#ffffff;color:#000;">毕尔巴鄂竞技</div>
<div class="c" style="left:501px;top:497px;width:44px;height:25px;line-height:27px;background:#fdf9f6;">0.77</div>
<div class="c" style="left:546px;top:497px;width:96px;height:25px;line-height:27px;background:#fdf9f6;">平手</div>
<div class="c" style="left:643px;top:497px;width:45px;height:25px;line-height:27px;background:#fdf9f6;">1.13</div>
<div class="c" style="left:689px;top:497px;width:66px;height:25px;line-height:27px;background:#eff7fc;">2.74</div>
<div class="c" style="left:756px;top:497px;width:66px;height:25px;line-height:27px;background:#eff7fc;">3.02</div>
<div class="c" style="left:823px;top:497px;width:68px;height:25px;line-height:27px;background:#eff7fc;">2.81</div>
<div class="c" style="left:892px;top:497px;width:38px;height:25px;line-height:27px;background:#ffffff;color:#1c1cb4;">负</div>
<div class="c" style="left:931px;top:497px;width:38px;height:25px;line-height:27px;background:#ffffff;color:#1c1cb4;">输</div>
<div class="c" style="left:970px;top:497px;width:59px;height:25px;line-height:27px;background:#ffffff;color:#1c1cb4;">小</div>
<div class="c" style="left:3px;top:523px;width:80px;height:25px;line-height:27px;background:#006633;color:#f0fff8;">西甲</div>
<div class="b" style="left:3px;top:522px;width:80px;height:1px;background:#a9d6c2;"></div>
<div class="c" style="left:84px;top:523px;width:77px;height:25px;line-height:27px;background:#f0f0f0;">25-03-10</div>
<div class="c" style="left:162px;top:523px;width:94px;height:25px;line-height:27px;background:#f0f0f0;color:#000;">皇家社会</div>
<div class="c" style="left:257px;top:523px;width:91px;height:25px;line-height:27px;background:#f0f0f0;"><span style="color:#c41a1a">0-1</span>(0-0)</div>
<div class="c" style="left:349px;top:523px;width:37px;height:25px;line-height:27px;background:#f0f0f0;">6-3</div>
<div class="c" style="left:387px;top:523px;width:113px;height:25px;line-height:27px;background:#f0f0f0;color:#137513;">塞维利亚</div>
<div class="c" style="left:501px;top:523px;width:44px;height:25px;line-height:27px;background:#fdf9f6;">1.11</div>
<div class="c" style="left:546px;top:523px;width:96px;height:25px;line-height:27px;background:#fdf9f6;">平/半</div>
<div class="c" style="left:643px;top:523px;width:45px;height:25px;line-height:27px;background:#fdf9f6;">0.79</div>
<div class="c" style="left:689px;top:523px;width:66px;height:25px;line-height:27px;background:#eff7fc;">2.43</div>
<div class="c" style="left:756px;top:523px;width:66px;height:25px;line-height:27px;background:#eff7fc;">3.01</div>
<div class="c" style="left:823px;top:523px;width:68px;height:25px;line-height:27px;background:#eff7fc;">3.24</div>
<div class="c" style="left:892px;top:523px;width:38px;height:25px;line-height:27px;background:#f0f0f0;color:#e02020;">胜</div>
<div class="c" style="left:931px;top:523px;width:38px;height:25px;line-height:27px;background:#f0f0f0;color:#d02020;">赢</div>
<div class="c" style="left:970px;top:523px;width:59px;height:25px;line-height:27px;background:#f0f0f0;color:#1c1cb4;">小</div>
<div class="c" style="left:3px;top:549px;width:80px;height:25px;line-height:27px;background:#006633;color:#f0fff8;">西甲</div>
<div class="b" style="left:3px;top:548px;width:80px;height:1px;background:#a9d6c2;"></div>
<div class="c" style="left:84px;top:549px;width:77px;height:25px;line-height:27px;background:#ffffff;">25-03-01</div>
<div class="c" style="left:162px;top:549px;width:94px;height:25px;line-height:27px;background:#ffffff;color:#000;">巴列卡诺</div>
<div class="c" style="left:257px;top:549px;width:91px;height:25px;line-height:27px;background:#ffffff;"><span style="color:#c41a1a">1-1</span>(0-0)</div>
<div class="c" style="left:349px;top:549px;width:37px;height:25px;line-height:27px;background:#ffffff;">6-6</div>
<div class="c" style="left:387px;top:549px;width:113px;height:25px;line-height:27px;background:#ffffff;color:#137513;">塞维利亚</div>
<div class="c" style="left:501px;top:549px;width:44px;height:25px;line-height:27px;background:#fdf9f6;">0.80</div>
<div class="c" style="left:546px;top:549px;width:96px;height:25px;line-height:27px;background:#fdf9f6;">平手</div>
<div class="c" style="left:643px;top:549px;width:45px;height:25px;line-height:27px;background:#fdf9f6;">1.09</div>
<div class="c" style="left:689px;top:549px;width:66px;height:25px;line-height:27px;background:#eff7fc;">2.50</div>
<div class="c" style="left:756px;top:549px;width:66px;height:25px;line-height:27px;background:#eff7fc;">3.04</div>
<div class="c" style="left:823px;top:549px;width:68px;height:25px;line-height:27px;background:#eff7fc;">3.08</div>
<div class="c" style="left:892px;top:549px;width:38px;height:25px;line-height:27px;background:#ffffff;color:#0b6e0b;">平</div>
<div class="c" style="left:931px;top:549px;width:38px;height:25px;line-height:27px;background:#ffffff;color:#0b6e0b;">走</div>
<div class="c" style="left:970px;top:549px;width:59px;height:25px;line-height:27px;background:#ffffff;color:#0b6e0b;">走</div>
<div class="c" style="left:3px;top:575px;width:80px;height:25px;line-height:27px;background:#006633;color:#f0fff8;">西甲</div>
<div class="b" style="left:3px;top:574px;width:80px;height:1px;background:#a9d6c2;"></div>
<div class="c" style="left:84px;top:575px;width:77px;height:25px;line-height:27px;background:#f0f0f0;">25-02-25</div>
<div class="c" style="left:162px;top:575px;width:94px;height:25px;line-height:27px;background:#f0f0f0;color:#137513;">塞维利亚</div>
<div class="c" style="left:257px;top:575px;width:91px;height:25px;line-height:27px;background:#f0f0f0;"><span style="color:#c41a1a">1-1</span>(1-0)</div>
<div class="c" style="left:349px;top:575px;width:37px;height:25px;line-height:27px;background:#f0f0f0;">4-4</div>
<div class="c" style="left:387px;top:575px;width:113px;height:25px;line-height:27px;background:#f0f0f0;color:#000;">马洛卡</div>
<div class="c" style="left:501px;top:575px;width:44px;height:25px;line-height:27px;background:#fdf9f6;">0.96</div>
<div class="c" style="left:546px;top:575px;width:96px;height:25px;line-height:27px;background:#fdf9f6;">半球</div>
<div class="c" style="left:643px;top:575px;width:45px;height:25px;line-height:27px;background:#fdf9f6;">0.93</div>
<div class="c" style="left:689px;top:575px;width:66px;height:25px;line-height:27px;background:#eff7fc;">1.97</div>
<div class="c" style="left:756px;top:575px;width:66px;height:25px;line-height:27px;background:#eff7fc;">3.24</div>
<div class="c" style="left:823px;top:575px;width:68px;height:25px;line-height:27px;background:#eff7fc;">4.24</div>
<div class="c" style="left:892px;top:575px;width:38px;height:25px;line-height:27px;background:#f0f0f0;color:#0b6e0b;">平</div>
<div class="c" style="left:931px;top:575px;width:38px;height:25px;line-height:27px;background:#f0f0f0;color:#1c1cb4;">输</div>
<div class="c" style="left:970px;top:575px;width:59px;height:25px;line-height:27px;background:#f0f0f0;color:#0b6e0b;">走</div>
<div class="c" style="left:3px;top:601px;width:80px;height:25px;line-height:27px;background:#006633;color:#f0fff8;">西甲</div>
<div class="b" style="left:3px;top:600px;width:80px;height:1px;background:#a9d6c2;"></div>
<div class="c" style="left:84px;top:601px;width:77px;height:25px;line-height:27px;background:#ffffff;">25-02-16</div>
<div class="c" style="left:162px;top:601px;width:94px;height:25px;line-height:27px;background:#ffffff;color:#000;">巴拉多利德</div>
<div class="c" style="left:257px;top:601px;width:91px;height:25px;line-height:27px;background:#ffffff;"><span style="color:#c41a1a">0-4</span>(0-2)</div>
<div class="c" style="left:349px;top:601px;width:37px;height:25px;line-height:27px;background:#ffffff;">3-2</div>
<div class="c" style="left:387px;top:601px;width:113px;height:25px;line-height:27px;background:#ffffff;color:#137513;">塞维利亚</div>
<div class="c" style="left:501px;top:601px;width:44px;height:25px;line-height:27px;background:#fdf9f6;">0.88</div>
<div class="c" style="left:546px;top:601px;width:96px;height:25px;line-height:27px;background:#fdf9f6;">受半球</div>
<div class="c" style="left:643px;top:601px;width:45px;height:25px;line-height:27px;background:#fdf9f6;">1.01</div>
<div class="c" style="left:689px;top:601px;width:66px;height:25px;line-height:27px;background:#eff7fc;">4.15</div>
<div class="c" style="left:756px;top:601px;width:66px;height:25px;line-height:27px;background:#eff7fc;">3.31</div>
<div class="c" style="left:823px;top:601px;width:68px;height:25px;line-height:27px;background:#eff7fc;">1.96</div>
<div class="c" style="left:892px;top:601px;width:38px;height:25px;line-height:27px;background:#ffffff;color:#e02020;">胜</div>
<div class="c" style="left:931px;top:601px;width:38px;height:25px;line-height:27px;background:#ffffff;color:#d02020;">赢</div>
<div class="c" style="left:970px;top:601px;width:59px;height:25px;line-height:27px;background:#ffffff;color:#cc2a1a;">大</div>
<div class="c" style="left:3px;top:627px;width:80px;height:25px;line-height:27px;background:#006633;color:#f0fff8;">西甲</div>
<div class="b" style="left:3px;top:626px;width:80px;height:1px;background:#a9d6c2;"></div>
<div class="c" style="left:84px;top:627px;width:77px;height:25px;line-height:27px;background:#f0f0f0;">25-02-10</div>
<div class="c" style="left:162px;top:627px;width:94px;height:25px;line-height:27px;background:#f0f0f0;color:#137513;">塞维利亚</div>
<div class="c" style="left:257px;top:627px;width:91px;height:25px;line-height:27px;background:#f0f0f0;"><span style="color:#c41a1a">1-4</span>(1-1)</div>
<div class="c" style="left:349px;top:627px;width:37px;height:25px;line-height:27px;background:#f0f0f0;">5-6</div>
<div class="c" style="left:387px;top:627px;width:113px;height:25px;line-height:27px;background:#f0f0f0;color:#000;">巴塞罗那<span class="rc">1</span></div>
<div class="c" style="left:501px;top:627px;width:44px;height:25px;line-height:27px;background:#fdf9f6;">0.92</div>
<div class="c" style="left:546px;top:627px;width:96px;height:25px;line-height:27px;background:#fdf9f6;">受一/球半</div>
<div class="c" style="left:643px;top:627px;width:45px;height:25px;line-height:27px;background:#fdf9f6;">0.97</div>
<div class="c" style="left:689px;top:627px;width:66px;height:25px;line-height:27px;background:#eff7fc;">6.36</div>
<div class="c" style="left:756px;top:627px;width:66px;height:25px;line-height:27px;background:#eff7fc;">4.94</div>
<div class="c" style="left:823px;top:627px;width:68px;height:25px;line-height:27px;background:#eff7fc;">1.45</div>
<div class="c" style="left:892px;top:627px;width:38px;height:25px;line-height:27px;background:#f0f0f0;color:#1c1cb4;">负</div>
<div class="c" style="left:931px;top:627px;width:38px;height:25px;line-height:27px;background:#f0f0f0;color:#1c1cb4;">输</div>
<div class="c" style="left:970px;top:627px;width:59px;height:25px;line-height:27px;background:#f0f0f0;color:#cc2a1a;">大</div>
<div class="c" style="left:3px;top:653px;width:80px;height:25px;line-height:27px;background:#006633;color:#f0fff8;">西甲</div>
<div class="b" style="left:3px;top:652px;width:80px;height:1px;background:#a9d6c2;"></div>
<div class="c" style="left:84px;top:653px;width:77px;height:25px;line-height:27px;background:#ffffff;">25-02-01</div>
<div class="c" style="left:162px;top:653px;width:94px;height:25px;line-height:27px;background:#ffffff;color:#000;">赫塔菲</div>
<div class="c" style="left:257px;top:653px;width:91px;height:25px;line-height:27px;background:#ffffff;"><span style="color:#c41a1a">0-0</span>(0-0)</div>
<div class="c" style="left:349px;top:653px;width:37px;height:25px;line-height:27px;background:#ffffff;">6-5</div>
<div class="c" style="left:387px;top:653px;width:113px;height:25px;line-height:27px;background:#ffffff;color:#137513;">塞维利亚</div>
<div class="c" style="left:501px;top:653px;width:44px;height:25px;line-height:27px;background:#fdf9f6;">0.84</div>
<div class="c" style="left:546px;top:653px;width:96px;height:25px;line-height:27px;background:#fdf9f6;">平手</div>
<div class="c" style="left:643px;top:653px;width:45px;height:25px;line-height:27px;background:#fdf9f6;">1.05</div>
<div class="c" style="left:689px;top:653px;width:66px;height:25px;line-height:27px;background:#eff7fc;">2.59</div>
<div class="c" style="left:756px;top:653px;width:66px;height:25px;line-height:27px;background:#eff7fc;">2.84</div>
<div class="c" style="left:823px;top:653px;width:68px;height:25px;line-height:27px;background:#eff7fc;">3.17</div>
<div class="c" style="left:892px;top:653px;width:38px;height:25px;line-height:27px;background:#ffffff;color:#0b6e0b;">平</div>
<div class="c" style="left:931px;top:653px;width:38px;height:25px;line-height:27px;background:#ffffff;color:#0b6e0b;">走</div>
<div class="c" style="left:970px;top:653px;width:59px;height:25px;line-height:27px;background:#ffffff;color:#1c1cb4;">小</div>
<div class="c" style="left:3px;top:679px;width:80px;height:25px;line-height:27px;background:#006633;color:#f0fff8;">西甲</div>
<div class="b" style="left:3px;top:678px;width:80px;height:1px;background:#a9d6c2;"></div>
<div class="c" style="left:84px;top:679px;width:77px;height:25px;line-height:27px;background:#f0f0f0;">25-01-26</div>
<div class="c" style="left:162px;top:679px;width:94px;height:25px;line-height:27px;background:#f0f0f0;color:#137513;">塞维利亚</div>
<div class="c" style="left:257px;top:679px;width:91px;height:25px;line-height:27px;background:#f0f0f0;"><span style="color:#c41a1a">1-1</span>(0-1)</div>
<div class="c" style="left:349px;top:679px;width:37px;height:25px;line-height:27px;background:#f0f0f0;">5-1</div>
<div class="c" style="left:387px;top:679px;width:113px;height:25px;line-height:27px;background:#f0f0f0;color:#000;">西班牙人</div>
<div class="c" style="left:501px;top:679px;width:44px;height:25px;line-height:27px;background:#fdf9f6;">1.04</div>
<div class="c" style="left:546px;top:679px;width:96px;height:25px;line-height:27px;background:#fdf9f6;">半/一</div>
<div class="c" style="left:643px;top:679px;width:45px;height:25px;line-height:27px;background:#fdf9f6;">0.85</div>
<div class="c" style="left:689px;top:679px;width:66px;height:25px;line-height:27px;background:#eff7fc;">1.75</div>
<div class="c" style="left:756px;top:679px;width:66px;height:25px;line-height:27px;background:#eff7fc;">3.54</div>
<div class="c" style="left:823px;top:679px;width:68px;height:25px;line-height:27px;background:#eff7fc;">5.01</div>
<div class="c" style="left:892px;top:679px;width:38px;height:25px;line-height:27px;background:#f0f0f0;color:#0b6e0b;">平</div>
<div class="c" style="left:931px;top:679px;width:38px;height:25px;line-height:27px;background:#f0f0f0;color:#1c1cb4;">输</div>
<div class="c" style="left:970px;top:679px;width:59px;height:25px;line-height:27px;background:#f0f0f0;color:#1c1cb4;">小</div>
<div class="c" style="left:3px;top:705px;width:1026px;height:25px;line-height:27px;background:#ffffff;letter-spacing:0.23px;">近<span style="color:#c41a1a">10</span>场,胜2平4负4, 胜率:<span style="color:#c41a1a">20%</span> 让胜率:<span style="color:#c41a1a">20%</span> 大率:<span style="color:#c41a1a">40%</span> 单率:<span style="color:#c41a1a">50%</span></div>
</body></html>
